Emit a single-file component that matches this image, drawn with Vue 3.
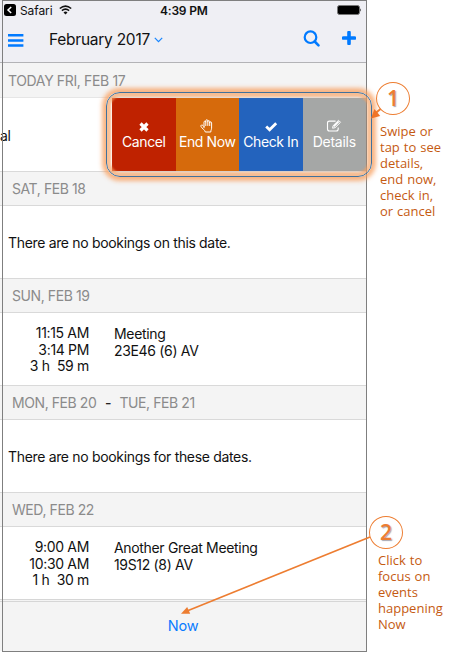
<script setup>
const actions = [
  { label: 'Cancel', kind: 'cancel' },
  { label: 'End Now', kind: 'end' },
  { label: 'Check In', kind: 'check' },
  { label: 'Details', kind: 'details' },
]
const days = [
  { from: 'SAT, FEB 18', empty: 'There are no bookings on this date.' },
  { from: 'SUN, FEB 19', times: ['11:15 AM', '3:14 PM', '3 h  59 m'], title: 'Meeting', room: '23E46 (6) AV' },
  { from: 'MON, FEB 20', to: 'TUE, FEB 21', empty: 'There are no bookings for these dates.' },
  { from: 'WED, FEB 22', times: ['9:00 AM', '10:30 AM', '1 h  30 m'], title: 'Another Great Meeting', room: '19S12 (8) AV' },
]
const noteOne = 'Swipe or\ntap to see\ndetails,\nend now,\ncheck in,\nor cancel'
const noteTwo = 'Click to\nfocus on\nevents\nhappening\nNow'
</script>

<template>
  <div class="page">
    <main class="phone">
      <header class="top">
        <div class="status">
          <div class="back">
            <svg width="12" height="12" viewBox="0 0 12 12"><rect width="12" height="12" rx="2.5" fill="#000" /><path d="M7.2 3 4 6l3.2 3" fill="none" stroke="#fff" stroke-width="1.5" /></svg>
            <span>Safari</span>
            <svg class="wifi" width="13" height="10" viewBox="0 0 13 10"><g fill="none" stroke="#111" stroke-width="1.6"><path d="M.8 3.5Q6.5-1.4 12.2 3.5" /><path d="M2.9 5.7Q6.5 2.5 10.1 5.7" /></g><path d="M4.5 7.4Q6.5 5.8 8.5 7.4L6.5 9.5z" fill="#111" /></svg>
          </div>
          <strong>4:39 PM</strong>
          <svg class="battery" width="25" height="10" viewBox="0 0 25 10"><rect x=".5" y=".5" width="22" height="9" rx="2" fill="#000" stroke="#777" /><path d="M23.2 3.2q1.7 1.8 0 3.6z" fill="#222" /></svg>
        </div>
        <nav class="bar">
          <svg class="menu" width="16" height="14" viewBox="0 0 16 14"><path d="M0 1.3h15.4M0 6.4h15.4M0 11.5h15.4" stroke="#007aff" stroke-width="2.5" /></svg>
          <span class="month">February 2017</span>
          <svg class="caret" width="9" height="6" viewBox="0 0 9 6"><path d="m.8.8 3.7 3.8L8.2.8" fill="none" stroke="#1685ff" stroke-width="1.2" /></svg>
          <svg class="search" width="18" height="18" viewBox="0 0 18 18"><circle cx="7.5" cy="7.2" r="5.8" fill="none" stroke="#007aff" stroke-width="2.2" /><path d="m11.7 11.5 3.8 3.8" stroke="#007aff" stroke-width="2.6" stroke-linecap="round" /></svg>
          <svg class="plus" width="14" height="14" viewBox="0 0 14 14"><path d="M7 1.5v11M1.5 7h11" stroke="#007aff" stroke-width="3.6" stroke-linecap="round" /></svg>
        </nav>
      </header>

      <h2 class="date today"><span>TODAY FRI, FEB 17</span></h2>
      <section class="row swiped">
        <span class="leftover">al</span>
        <div class="actions">
          <button v-for="a in actions" :key="a.kind" :class="['action', a.kind]">
            <svg v-if="a.kind === 'cancel'" width="16" height="14" viewBox="0 0 16 14"><path d="m4.5 4.5 7 7m0-7-7 7" stroke="#fff" stroke-width="3.2" /></svg>
            <svg v-else-if="a.kind === 'end'" width="16" height="14" viewBox="0 0 16 14"><path d="M5 8.8V3.2c0-1.4 1.8-1.4 1.8 0V1.8c0-1.5 2-1.5 2 0v.8c0-1.3 1.9-1.3 1.9 0v1.2c0-1.3 1.9-1.3 1.9 0v5.4c0 1.4-.8 1.8-.8 3.8H6.3c0-1.9-3.7-3.6-4.4-5.7-.3-1.1 1.1-1.9 2-.8L5 7.6M6.8 3v3.6M8.8 2.5v4M10.7 3.5v3.1" fill="none" stroke="#fff" stroke-width="1" stroke-linecap="round" stroke-linejoin="round" /></svg>
            <svg v-else-if="a.kind === 'check'" width="16" height="14" viewBox="0 0 16 14"><path d="m3.2 7.4 3.4 3.3 6.6-6.5" fill="none" stroke="#fff" stroke-width="2.8" /></svg>
            <svg v-else width="16" height="14" viewBox="0 0 16 14"><g fill="none" stroke="#fff"><path d="M9.6 2.1H3.5Q1.5 2.1 1.5 4v6q0 2 2 2h6.7q2 0 2-2V8.6" stroke-width="1.1" /><path d="m6.6 9.2.5-2.5 5.4-5.4 2 2-5.4 5.4z" stroke-width="1" stroke-linejoin="round" /><path d="m7.8 7.4 4.9-4.9" stroke-width="1.7" /></g></svg>
            <span>{{ a.label }}</span>
          </button>
        </div>
      </section>

      <template v-for="d in days" :key="d.from">
        <h2 class="date">
          <span>{{ d.from }}</span>
          <template v-if="d.to"><b>-</b><span>{{ d.to }}</span></template>
        </h2>
        <section class="row">
          <p v-if="d.empty" class="empty">{{ d.empty }}</p>
          <template v-else>
            <div class="times"><span v-for="t in d.times" :key="t">{{ t }}</span></div>
            <div class="event"><span>{{ d.title }}</span><span>{{ d.room }}</span></div>
          </template>
        </section>
      </template>
      <footer class="foot">Now</footer>
    </main>

    <aside class="notes">
      <div class="num">1</div>
      <p class="note">{{ noteOne }}</p>
      <div class="num two">2</div>
      <p class="note second">{{ noteTwo }}</p>
    </aside>

    <div class="frame"></div>
    <div class="glow"></div>
    <svg class="arrows" width="458" height="652" viewBox="0 0 458 652">
      <path d="m380.5 109-6 5" stroke="#ed7d31" stroke-width="2" />
      <path d="m371 118.5 3.4-9.5 5.8 7z" fill="#f07427" />
      <path d="M370 537 187 611" stroke="#ed7d31" stroke-width="1.7" />
      <path d="m181 613.7 6.2-6.8 3 6.8z" fill="#ed7d31" />
    </svg>
  </div>
</template>

<style>
body { margin: 0; background: #fff; }
</style>

<style scoped>
.page { position: relative; display: flex; width: 458px; height: 652px; overflow: hidden; background: #fff; font-family: Inter, "Liberation Sans", sans-serif; font-size: 14px; letter-spacing: -.33px; color: #111; }
.page * { box-sizing: border-box; }
svg { display: block; flex: none; }
.phone { width: 366px; height: 651px; flex: none; display: flex; flex-direction: column; }
.top { height: 63px; flex: none; background: #efeff4; border-bottom: 1px solid #b3b3b6; }
.status { height: 20px; display: grid; grid-template-columns: 156px 1fr 28px; align-items: center; padding-left: 4px; font-size: 12px; letter-spacing: 0; }
.back { display: flex; align-items: center; gap: 4px; }
.back span { width: 32px; letter-spacing: -.1px; }
.wifi { margin-left: 3px; }
.status strong { font-weight: 600; letter-spacing: -.2px; }
.battery { justify-self: end; margin-right: 4px; }
.bar { height: 40px; display: flex; align-items: center; padding: 0 0 2px 8px; }
.menu { margin-top: 3px; }
.month { width: 100px; margin-left: 25px; padding-top: 2px; font-size: 15.5px; letter-spacing: -.25px; line-height: 20px; white-space: nowrap; }
.caret { margin: 2px 0 0 5px; }
.search { margin-left: auto; }
.plus { margin: 0 10px 2px 21px; }
.date { margin: 0; height: 35px; flex: none; display: flex; align-items: center; gap: 8.5px; padding-left: 12px; font-size: 14px; letter-spacing: -.42px; font-weight: 400; color: #8b8b8b; background: #f4f4f4; border-top: 1px solid #d9d9d9; border-bottom: 1px solid #d9d9d9; }
.today { padding-left: 8px; letter-spacing: -.36px; border-top: 0; border-color: #e6e6e6; }
.date b { color: #222; font-weight: 500; }
.row { height: 72.1px; flex: none; display: flex; background: #fff; }
.row.swiped { height: 73px; justify-content: space-between; align-items: flex-start; }
.leftover { align-self: center; line-height: 18px; padding-top: 2px; }
.actions { display: grid; grid-template-columns: repeat(4, 63.5px); height: 73px; }
.action { border: 0; padding: 21px 0 0; margin: 0; display: flex; flex-direction: column; align-items: center; color: #fff; font: 14px/18px Inter, "Liberation Sans", sans-serif; letter-spacing: -.4px; white-space: nowrap; }
.cancel { background: #bf2200; }
.end { background: #d66a0c; }
.check { background: #2363bd; }
.details { background: #a5a7a6; letter-spacing: -.25px; }
.empty { margin: 0; align-self: center; padding-left: 8px; }
.times { width: 89px; padding-top: 12px; display: flex; flex-direction: column; align-items: flex-end; line-height: 16.5px; white-space: pre; }
.event { padding: 13px 0 0 25px; display: flex; flex-direction: column; line-height: 16.5px; white-space: nowrap; }
.foot { flex: 1; background: #f4f4f4; border-top: 3px double #d6d6d6; color: #0a7bff; text-align: center; font-size: 14.5px; letter-spacing: -.2px; padding-top: 14px; line-height: 20px; }
.notes { padding: 82px 0 0 10px; letter-spacing: 0; }
.num { width: 34px; height: 33px; border: 1px solid #ed7d31; border-radius: 50%; text-align: center; font: 600 21px/31px "Open Sans", sans-serif; color: #ed7d31; text-shadow: 1px 1px 1px rgba(80, 80, 100, .5); }
.note { margin: 8px 0 0 4px; font: 13px/16px "Open Sans", sans-serif; color: #c55a11; white-space: pre; word-spacing: .6px; }
.num.two { margin: 297px 0 0 -7px; }
.second { margin: 3px 0 0 2px; }
.frame { position: absolute; left: 2px; top: 0; width: 365px; height: 652px; border: 1px solid #7f7f7f; pointer-events: none; }
.glow { position: absolute; left: 106px; top: 92px; width: 266px; height: 85px; border: 1px solid #41719c; border-radius: 14px; box-shadow: 0 0 4px 4px rgba(248, 160, 96, .78), inset 0 0 2px 4px rgba(248, 160, 96, .65); }
.arrows { position: absolute; left: 0; top: 0; pointer-events: none; }
</style>
